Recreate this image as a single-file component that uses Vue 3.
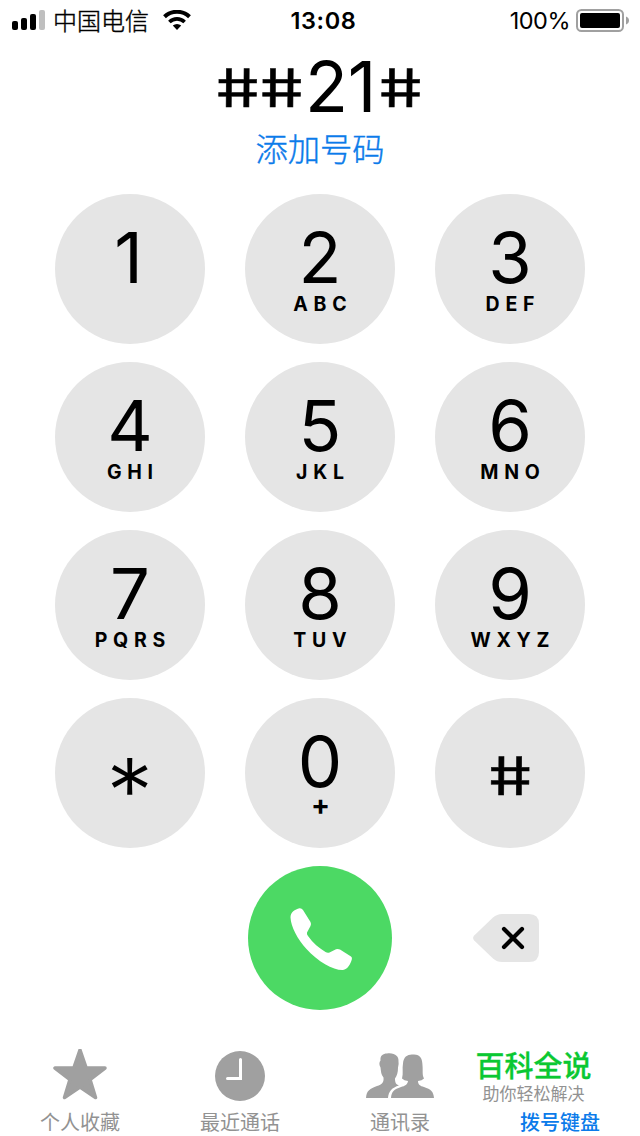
<template>
  <div class="phone">
    <header class="status">
      <div class="status-left">
        <svg class="signal" width="34" height="20" viewBox="0 0 34 20">
          <rect x="0" y="11" width="6" height="9" rx="2" />
          <rect x="9" y="8" width="6" height="12" rx="2" />
          <rect x="18" y="4" width="6" height="16" rx="2" />
          <rect x="27" y="0" width="6" height="20" rx="2" fill="#bfbfbf" />
        </svg>
        <span class="carrier">中国电信</span>
        <svg class="wifi" width="28" height="20" viewBox="0 0 28 20">
          <path d="M1.5 6.8a18 18 0 0 1 25 0" fill="none" stroke="#000" stroke-width="4" />
          <path d="M6.4 12a11 11 0 0 1 15.2 0" fill="none" stroke="#000" stroke-width="3.7" />
          <path d="M9.8 15.6a6.2 6.2 0 0 1 8.4 0L14 20z" />
        </svg>
      </div>
      <span class="time">13:08</span>
      <div class="status-right">
        <span class="percent">100%</span>
        <svg class="battery" width="53" height="23" viewBox="0 0 53 23">
          <rect x="1" y="1" width="46" height="21" rx="4.5" fill="none" stroke="#a0a0a0" stroke-width="2" />
          <rect x="4" y="4" width="40" height="15" rx="2" />
          <path d="M50 7.5c4 1.2 4 6.8 0 8z" fill="#a0a0a0" />
        </svg>
      </div>
    </header>

    <div class="number">
      <span v-for="(ch, i) in number" :key="i" :class="charClass(ch)">{{ ch }}</span>
    </div>
    <a class="add">添加号码</a>

    <main class="keypad">
      <button v-for="key in keys" :key="key.main" class="key">
        <span class="main" :class="charClass(key.main)">{{ key.main }}</span>
        <span v-if="key.sub" class="sub" :class="{ plus: key.sub === '+' }">{{ key.sub }}</span>
      </button>
    </main>

    <div class="actions">
      <button class="call" @click="number = ''">
        <svg width="144" height="144" viewBox="0 0 144 144">
          <path
            fill="#fff"
            d="M42.5 51.5C42.3 46 47 43.5 51.5 42.2Q53.7 42 55 44L62.5 56Q63.5 58 62.5 60L59 66.5Q58.5 68 60 70C65 77 71 82 77.5 86Q79.5 87.3 81.5 86.5L88 83.3Q90 82.5 92 83.6L103 90.5Q104.5 91.7 103.8 93.5C102.5 98 99.5 103.5 95 104C86 104.5 70 96 58.5 83C49.5 73 43 61 42.5 51.5Z"
          />
        </svg>
      </button>
      <button class="delete" @click="number = number.slice(0, -1)">
        <svg width="66" height="48" viewBox="0 0 66 48">
          <path fill="#e5e5e5" d="M1.2 21.5L20 3.5Q24 0 29 0H56Q66 0 66 10V38Q66 48 56 48H29Q24 48 20 44.5L1.2 26.5Q-1 24 1.2 21.5Z" />
          <path d="M31 15L49 33M49 15L31 33" fill="none" stroke="#000" stroke-width="4.2" stroke-linecap="round" />
        </svg>
      </button>
    </div>

    <nav class="tabs">
      <div class="tab">
        <svg width="54" height="52" viewBox="0 1 54 52">
          <path
            d="M27 2L33.2 20H52L37 31.5L42.5 49.5L27 39L11.5 49.5L17 31.5L2 20H20.8Z"
            fill="#a0a0a0"
            stroke="#a0a0a0"
            stroke-width="3.5"
            stroke-linejoin="round"
          />
        </svg>
        <span>个人收藏</span>
      </div>
      <div class="tab">
        <svg width="50" height="52" viewBox="0 0 50 52">
          <circle cx="25" cy="27" r="25" fill="#a0a0a0" />
          <path d="M25.5 10.5V29.5H12.5" fill="none" stroke="#fff" stroke-width="3" stroke-linecap="round" />
        </svg>
        <span>最近通话</span>
      </div>
      <div class="tab">
        <svg width="70" height="52" viewBox="0 0.5 70 52">
          <path
            fill="#a0a0a0"
            d="M1 49.5C1.500 42 5 40 12 37.500C17 36 19 34 18.500 29C16 26 16 23 15.500 19C14 16 14 14 15.500 12C15 7 18 5 22 5C30 4 34 8 33.500 13Q34 15 33 19C33 24 32 27 30 30C30 34 31 36 34 37C27 39 23.500 43 23 49.500Z"
          />
          <path
            fill="#a0a0a0"
            d="M26 49.5C26.500 43 29 41 36 38.500C40 37.500 42.500 36 43 32.500Q39 32 37 30C38.500 25 37 20 38 15C38.500 8 43 5.500 48 6C55 5.500 57.500 10 57.500 17C58 23 57 26 59 30Q57 32 53 32.500C53 36 55 37.500 59 38.500C66 41 68.500 43 69 49.500Z"
          />
        </svg>
        <span>通讯录</span>
      </div>
      <div class="tab active">
        <span>拨号键盘</span>
        <div class="promo">
          <strong>百科全说</strong>
          <small>助你轻松解决</small>
        </div>
      </div>
    </nav>
  </div>
</template>

<script setup>
import { ref } from "vue";

const number = ref("##21#");

const keys = [
  { main: "1" },
  { main: "2", sub: "ABC" },
  { main: "3", sub: "DEF" },
  { main: "4", sub: "GHI" },
  { main: "5", sub: "JKL" },
  { main: "6", sub: "MNO" },
  { main: "7", sub: "PQRS" },
  { main: "8", sub: "TUV" },
  { main: "9", sub: "WXYZ" },
  { main: "*" },
  { main: "0", sub: "+" },
  { main: "#" },
];

const charClass = (ch) => ({ hash: ch === "#", star: ch === "*", one: ch === "1" });
</script>

<style>
body {
  margin: 0;
  background: #fff;
}
</style>

<style scoped>
.phone {
  width: 640px;
  height: 1136px;
  display: flex;
  flex-direction: column;
  overflow: hidden;
  background: #fff;
  color: #000;
  font-family: Inter, "Noto Sans CJK SC", sans-serif;
}

button {
  border: 0;
  padding: 0;
  background: none;
  color: inherit;
  font-family: inherit;
}

svg {
  display: block;
}

.status {
  height: 40px;
  display: grid;
  grid-template-columns: 1fr auto 1fr;
  align-items: center;
  padding: 0 11px 0 12px;
  font-size: 23.5px;
  line-height: 38px;
}

.status-left,
.status-right {
  display: flex;
  align-items: center;
}

.status-right {
  justify-content: flex-end;
}

.carrier {
  margin: 0 14px 0 7px;
  padding-top: 4px;
  font-size: 24px;
  font-weight: 300;
  line-height: 36px;
  -webkit-text-stroke: 0.4px #000;
}

.time {
  padding: 2px 0 0 6px;
  font-weight: 600;
  letter-spacing: 0.6px;
}

.percent {
  margin-right: 6px;
  padding-top: 2px;
  letter-spacing: -0.5px;
}

.number {
  height: 84px;
  display: flex;
  justify-content: center;
  padding-top: 17px;
  box-sizing: border-box;
  font-size: 70.5px;
  line-height: 60px;
}

.number span {
  width: 44px;
  text-align: center;
}

.number .one {
  width: 31px;
  margin: 0 2px 0 -2px;
}

/* upright, square hash sign */
.number .hash,
.main.hash {
  -webkit-text-stroke: 0.6px #000;
  transform: scale(0.98, 0.75) skewX(9deg);
}

.number .hash {
  margin: 0 1px 0 -1px;
}

.add {
  height: 48px;
  padding-top: 2px;
  box-sizing: border-box;
  color: #0b7bea;
  font-size: 32.3px;
  font-weight: 300;
  line-height: 48px;
  text-align: center;
  -webkit-text-stroke: 0.4px #0b7bea;
}

.keypad {
  display: grid;
  grid-template-columns: repeat(3, 150px);
  grid-auto-rows: 150px;
  gap: 18px 40px;
  justify-content: center;
  margin-top: 22px;
}

.key {
  display: flex;
  flex-direction: column;
  align-items: center;
  padding-top: 34px;
  border-radius: 50%;
  background: #e5e5e5;
}

.main {
  font-size: 70.5px;
  line-height: 60px;
}

.main.one {
  margin-right: 3px;
}

.main.hash {
  margin-top: 14px;
}

.main.star {
  margin-top: 14px;
  transform: translateY(12px) scale(1.33, 1.27);
  transform-origin: 50% 17px;
  font-weight: 300;
}

.sub {
  margin-top: 6px;
  padding-left: 5.7px;
  font-size: 19.5px;
  font-weight: 650;
  line-height: 21px;
  letter-spacing: 5.7px;
}

.plus {
  margin-top: 3px;
  padding-left: 1px;
  font-size: 28px;
  letter-spacing: 0;
}

.actions {
  display: grid;
  grid-template-columns: repeat(3, 150px);
  column-gap: 40px;
  justify-content: center;
  justify-items: center;
  align-items: center;
  margin-top: 18px;
}

.call {
  grid-column: 2;
  width: 144px;
  height: 144px;
  border-radius: 50%;
  background: #4cd964;
}

.delete {
  margin-right: 8px;
}

.tabs {
  display: grid;
  grid-template-columns: repeat(4, 160px);
  height: 98px;
  margin-top: 28px;
}

.tab {
  position: relative;
  display: flex;
  flex-direction: column;
  justify-content: flex-end;
  align-items: center;
  color: #929292;
  font-size: 20px;
  line-height: 26px;
}

.tab svg {
  margin-bottom: 9px;
}

.active {
  color: #0b7bea;
  font-weight: 500;
}

.promo {
  position: absolute;
  top: 11px;
  left: -10px;
  width: 127px;
  display: flex;
  flex-direction: column;
  align-items: center;
}

.promo strong {
  color: #0ac832;
  font-size: 29px;
  font-weight: 500;
  line-height: 36px;
  -webkit-text-stroke: 0.3px #0ac832;
}

.promo small {
  margin-top: -1px;
  color: #929292;
  font-size: 17px;
  font-weight: 400;
  line-height: 20px;
}
</style>
